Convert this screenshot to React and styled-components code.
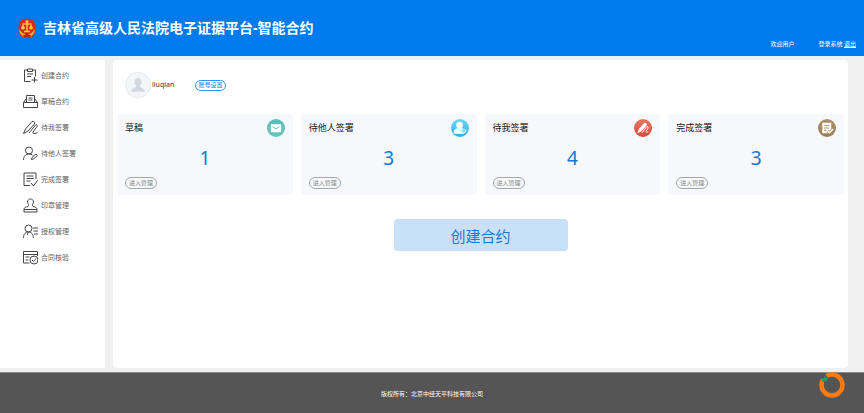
import React from 'react';
import styled, { createGlobalStyle } from 'styled-components';

const menuItems = [
  { id: 'create', label: '创建合约' },
  { id: 'draft', label: '草稿合约' },
  { id: 'mine', label: '待我签署' },
  { id: 'others', label: '待他人签署' },
  { id: 'done', label: '完成签署' },
  { id: 'seal', label: '印章管理' },
  { id: 'auth', label: '授权管理' },
  { id: 'verify', label: '合同核验' },
];

const cards = [
  { id: 'mail', title: '草稿', count: 1 },
  { id: 'person', title: '待他人签署', count: 3 },
  { id: 'pen', title: '待我签署', count: 4 },
  { id: 'note', title: '完成签署', count: 3 },
];

const menuPaths = {
  create: (
    <>
      <path d="M9 4H3v23h12M20 4h5v13M9 2h10v5H9zM8 12h12M8 17h8" />
      <path d="M23 18v11M17 24h12" />
    </>
  ),
  draft: (
    <>
      <path d="M7 16V3h16v13M11 8h8M11 12h8" />
      <path d="M7 11H5l-4 6v10h28V17l-4-6h-2M1 17h28" />
    </>
  ),
  mine: (
    <>
      <path d="M1 27l4-9L18 3c3-2 7 2 5 5L10 22l-9 5z" />
      <path d="M12 26L25 10c3-2 4 1 3 3l-8 11c-1 3 1 4 4 3l5-2" />
    </>
  ),
  others: (
    <>
      <circle cx="12" cy="9" r="7" />
      <path d="M1 28c0-8 5-12 11-12 3 0 5 1 7 2" />
      <path d="M17 27l1-4 8-7 3 3-8 7z" />
    </>
  ),
  done: (
    <>
      <path d="M26 14V2H2v25h12M7 8h14M7 13h14M7 18h8" />
      <path d="M16 22l5 6 8-11" />
    </>
  ),
  seal: (
    <>
      <path d="M11 15c1-3-2-4-2-7 0-8 12-8 12 0 0 3-3 4-2 7l1 2c5 1 8 2 8 6H2c0-4 3-5 8-6z" />
      <path d="M2 23v5h26v-5" />
    </>
  ),
  auth: (
    <>
      <circle cx="11" cy="9" r="7" />
      <path d="M1 28c0-8 4-12 10-12s9 4 10 12M11 16l-3 6M20 8h10M21 14h9M22 20h8" />
    </>
  ),
  verify: (
    <>
      <path d="M13 26H1V3h28v9M1 9h28M5 14h8M5 20h6" />
      <circle cx="22" cy="20" r="8" />
      <path d="M18 20l3 3 5-6" />
    </>
  ),
};

const MenuIcon = ({ id }) => (
  <MenuSvg viewBox="0 0 30 30" aria-hidden="true">
    {menuPaths[id]}
  </MenuSvg>
);

const badgeColors = {
  mail: ['#55bdb5', '#68c5bd'],
  person: ['#6ad8fa', '#32aee8'],
  pen: ['#e87763', '#d94b3d'],
  note: ['#ad9067', '#9c7e55'],
};

const badgeDrawings = {
  mail: (
    <>
      <rect x="8" y="11" width="22" height="17" rx="2" fill="#fff" />
      <path d="M12 16l7 5 7-5" fill="none" stroke="#5bc0b8" strokeWidth="2" />
    </>
  ),
  person: (
    <>
      <circle cx="18" cy="13" r="7" fill="#fff" />
      <path d="M6 28c0-6 5-9 12-9l8 1 7 5-6 6H8c-2 0-2-1-2-3z" fill="#fff" />
      <path d="M20 25h8M25 21l4 4-4 4" fill="none" stroke="#4dbff0" strokeWidth="2" />
    </>
  ),
  pen: (
    <>
      <path d="M7 30l4-10 10-11c3-3 8 1 5 5L16 26z" fill="#fff" />
      <path d="M17 29l10-13c4-1 3 3 2 5l-4 5c0 2 2 2 5 1" fill="none" stroke="#fff" strokeWidth="2" />
    </>
  ),
  note: (
    <>
      <path d="M9 8h19v15l-6 7H9z" fill="#fff" />
      <path d="M13 14h11M13 19h11M13 24h5" stroke="#a68a60" strokeWidth="2" />
      <path d="M20 25l4 4 8-8" fill="none" stroke="#a68a60" strokeWidth="6" />
      <path d="M20 25l4 4 8-8" fill="none" stroke="#fff" strokeWidth="3" />
    </>
  ),
};

const CardBadge = ({ id }) => (
  <BadgeSvg viewBox="0 0 38 38" aria-hidden="true">
    <defs>
      <linearGradient id={`badge-${id}`} x1="0" y1="0" x2="0" y2="1">
        <stop offset="0" stopColor={badgeColors[id][0]} />
        <stop offset="1" stopColor={badgeColors[id][1]} />
      </linearGradient>
    </defs>
    <circle cx="19" cy="19" r="19" fill={`url(#badge-${id})`} />
    {badgeDrawings[id]}
  </BadgeSvg>
);

const Emblem = () => (
  <EmblemSvg viewBox="0 0 36 40" aria-hidden="true">
    <path d="M18 1c11 0 17 7 17 17 0 6-1 12-3 17-3 5-25 5-28 0-2-5-3-11-3-17C1 8 7 1 18 1z" fill="#d92a16" />
    <path d="M2 22c1 7 3 12 7 14l9 3 9-3c4-2 6-7 7-14l-7 8-9 3-9-3z" fill="#f3a52a" />
    <path d="M18 7v20M9 12h18M12 27h12" stroke="#ffc53c" strokeWidth="3" fill="none" />
    <path d="M6 20l4-8 4 8c-2 4-6 4-8 0zM22 20l4-8 4 8c-2 4-6 4-8 0z" fill="#ffc53c" />
    <circle cx="18" cy="7" r="3" fill="#ffc53c" />
    <path d="M10 35l8-4 8 4-4 4h-8z" fill="#c91f14" />
  </EmblemSvg>
);

const App = () => {
  return (
    <Page>
      <GlobalStyle />
      <Header>
        <Brand>
          <Emblem />
          <Title>吉林省高级人民法院电子证据平台-智能合约</Title>
        </Brand>
        <UserLinks>
          <span>欢迎用户</span>
          <span>
            登录系统 <LogoutLink href="#logout">退出</LogoutLink>
          </span>
        </UserLinks>
      </Header>
      <Body>
        <Sidebar>
          {menuItems.map((item) => (
            <MenuLink key={item.id} href={`#${item.id}`}>
              <MenuIcon id={item.id} />
              {item.label}
            </MenuLink>
          ))}
        </Sidebar>
        <Panel>
          <Account>
            <Avatar>
              <svg viewBox="0 0 24 24" width="16" height="16" aria-hidden="true">
                <path
                  d="M12 2c4 0 6 3 5 7 0 2-1 3-2 4v2l6 3c1 1 1 2 1 4H2c0-2 0-3 1-4l6-3v-2c-1-1-2-2-2-4-1-4 1-7 5-7z"
                  fill="#d3d9e0"
                />
              </svg>
            </Avatar>
            <UserName>liuqian</UserName>
            <SettingsButton type="button">账号设置</SettingsButton>
          </Account>
          <CardGrid>
            {cards.map((card) => (
              <Card key={card.id}>
                <CardTop>
                  <CardTitle>{card.title}</CardTitle>
                  <CardBadge id={card.id} />
                </CardTop>
                <Count>{card.count}</Count>
                <EnterButton type="button">进入管理</EnterButton>
              </Card>
            ))}
          </CardGrid>
          <CreateButton type="button">创建合约</CreateButton>
        </Panel>
      </Body>
      <Footer>
        版权所有：北京中经天平科技有限公司
        <FloatingRing viewBox="0 0 52 52" aria-hidden="true">
          <circle cx="26" cy="26" r="21" fill="none" stroke="#f97a12" strokeWidth="9" />
          <path d="M2 12l10-9 6 9-8 9z" fill="#555" />
          <path d="M5 12l5 1 2-5 3 4 4 1-4 3-1 4-3-3-5 1z" fill="#18a574" />
        </FloatingRing>
      </Footer>
    </Page>
  );
};

export default App;

const GlobalStyle = createGlobalStyle`
  * {
    box-sizing: border-box;
  }
  body {
    margin: 0;
    font-family: "Noto Sans", "Noto Sans CJK SC", sans-serif;
    background: #f0f0f0;
  }
  button {
    font-family: inherit;
    padding: 0;
    cursor: pointer;
  }
`;

const Page = styled.div`
  display: flex;
  flex-direction: column;
  min-height: 100vh;
`;

const Header = styled.header`
  display: flex;
  justify-content: space-between;
  height: 56px;
  padding: 0 8px 0 18px;
  color: #fff;
  background: #007bee;
`;

const Brand = styled.div`
  display: flex;
  align-items: center;
  gap: 7px;
`;

const EmblemSvg = styled.svg`
  width: 18px;
  height: 20px;
`;

const Title = styled.h1`
  margin: 0;
  font-size: 14px;
  line-height: 20px;
  font-weight: 700;
`;

const UserLinks = styled.div`
  display: flex;
  align-items: flex-end;
  gap: 24px;
  padding-bottom: 7px;
  font-size: 6px;
  line-height: 10px;
`;

const LogoutLink = styled.a`
  color: inherit;
`;

const Body = styled.div`
  display: flex;
  flex: 1;
  gap: 8px;
  padding: 2px 16px 4px 0;
  border-top: 2px solid #e6f5fb;
`;

const Sidebar = styled.nav`
  width: 105px;
  padding-top: 2px;
  background: #fff;
`;

const MenuLink = styled.a`
  display: flex;
  align-items: center;
  gap: 3px;
  height: 26px;
  padding-left: 23px;
  font-size: 7px;
  color: #666;
  text-decoration: none;
`;

const MenuSvg = styled.svg`
  width: 15px;
  height: 15px;
  fill: none;
  stroke: #444;
  stroke-width: 2;
`;

const Panel = styled.main`
  display: flex;
  flex: 1;
  flex-direction: column;
  padding: 12px 4px;
  border-radius: 4px;
  background: #fff;
`;

const Account = styled.div`
  display: flex;
  align-items: center;
  padding-left: 8px;
`;

const Avatar = styled.div`
  display: flex;
  align-items: center;
  justify-content: center;
  width: 26px;
  height: 26px;
  border: 1px solid #e4e8ed;
  border-radius: 50%;
  background: #f4f6f9;
`;

const UserName = styled.span`
  width: 44px;
  padding-left: 1px;
  font-size: 7px;
  line-height: 10px;
  color: #333;
`;

const SettingsButton = styled.button`
  width: 31px;
  height: 11px;
  border: 1px solid #3c8fea;
  border-radius: 6px;
  font-size: 6px;
  line-height: 9px;
  color: #1478dc;
  background: #fff;
`;

const CardGrid = styled.div`
  display: grid;
  grid-template-columns: repeat(4, 1fr);
  gap: 8px;
  margin-top: 16px;
`;

const Card = styled.section`
  display: flex;
  flex-direction: column;
  height: 81px;
  padding: 4px 8px 6px;
  border-radius: 4px;
  background: #f6f8fc;
`;

const CardTop = styled.div`
  display: flex;
  align-items: center;
  justify-content: space-between;
`;

const CardTitle = styled.h2`
  margin: 0;
  font-size: 9px;
  line-height: 20px;
  font-weight: 400;
  color: #222;
`;

const BadgeSvg = styled.svg`
  width: 18px;
  height: 18px;
`;

const Count = styled.div`
  flex: 1;
  padding-top: 6px;
  font-size: 19px;
  line-height: 28px;
  text-align: center;
  color: #1177d8;
`;

const EnterButton = styled.button`
  width: 32px;
  height: 12px;
  border: 1px solid #a5a7aa;
  border-radius: 6px;
  font-size: 6px;
  line-height: 10px;
  color: #888;
  background: transparent;
`;

const CreateButton = styled.button`
  align-self: center;
  width: 174px;
  height: 32px;
  margin-top: 24px;
  border: 0;
  border-radius: 4px;
  font-size: 15px;
  color: #1b78d6;
  background: #c9e0f9;
`;

const Footer = styled.footer`
  position: relative;
  display: flex;
  align-items: center;
  justify-content: center;
  height: 41px;
  border-top: 1px solid #8a8a8a;
  font-size: 6px;
  color: #fff;
  background: #555;
`;

/* floats over the bottom right corner */
const FloatingRing = styled.svg`
  position: absolute;
  top: -1px;
  right: 19px;
  width: 26px;
  height: 26px;
`;
